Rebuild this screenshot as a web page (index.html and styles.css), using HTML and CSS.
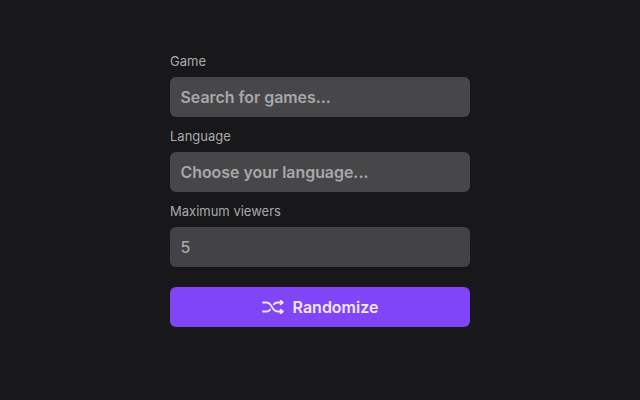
FILE: index.html
```html
<!DOCTYPE html>
<html lang="en">
<head>
    <meta charset="UTF-8">
    <title>Randomizer</title>
    <link rel="stylesheet" href="styles.css">
</head>
<body>
    <form class="form">
        <label class="label">Game</label>
        <input class="field" type="text" placeholder="Search for games...">
        <label class="label">Language</label>
        <input class="field" type="text" placeholder="Choose your language...">
        <label class="label">Maximum viewers</label>
        <input class="field field-num" type="text" value="5">
        <button class="btn" type="button">
            <svg class="icon" viewBox="0 0 22 14" fill="none" stroke="currentColor" stroke-width="1.8" stroke-linecap="round" stroke-linejoin="round">
                <path d="M1 2.5h3.5c1.8 0 2.9.8 3.9 2.1l3.2 4.8c1 1.3 2.1 2.1 3.9 2.1H20"/>
                <path d="M1 11.5h3.5c1.8 0 2.9-.8 3.7-1.9"/>
                <path d="M11.8 4.4c.8-1.1 1.9-1.9 3.7-1.9H20"/>
                <path d="M18.6 .8l2.2 1.7-2.2 1.7"/>
                <path d="M18.6 9.8l2.2 1.7-2.2 1.7"/>
            </svg>
            <span>Randomize</span>
        </button>
    </form>
</body>
</html>
```
FILE: styles.css
```css
body{
    margin: 0;
    height: 400px;
    overflow: hidden;
    background-color: #18181a;
    font-family: Inter, "Liberation Sans", sans-serif;
}
.form{
    display: flex;
    flex-direction: column;
    width: 300px;
    margin: 0 auto;
    padding-top: 53px;
}
.label{
    height: 16px;
    margin-bottom: 8px;
    font-size: 13px;
    line-height: 16px;
    color: #a9a9ac;
}
.field{
    box-sizing: border-box;
    width: 100%;
    height: 40px;
    margin-bottom: 11px;
    padding: 0 10.5px;
    border: 0;
    border-radius: 6px;
    background-color: #474749;
    font-family: inherit;
    font-size: 15.9px;
    font-weight: 600;
    color: #a8a8aa;
    outline: none;
}
.field::placeholder{
    color: #a8a8aa;
    opacity: 1;
}
.field-num{
    margin-bottom: 20px;
    font-weight: 500;
    background-color: #434345;
}
.btn{
    display: flex;
    align-items: center;
    justify-content: center;
    gap: 9px;
    width: 100%;
    height: 40px;
    border: 0;
    border-radius: 6px;
    background-color: #7f45f7;
    font-family: inherit;
    font-size: 16px;
    font-weight: 600;
    color: #efe6ff;
}
.icon{
    width: 22px;
    height: 14px;
}
```
